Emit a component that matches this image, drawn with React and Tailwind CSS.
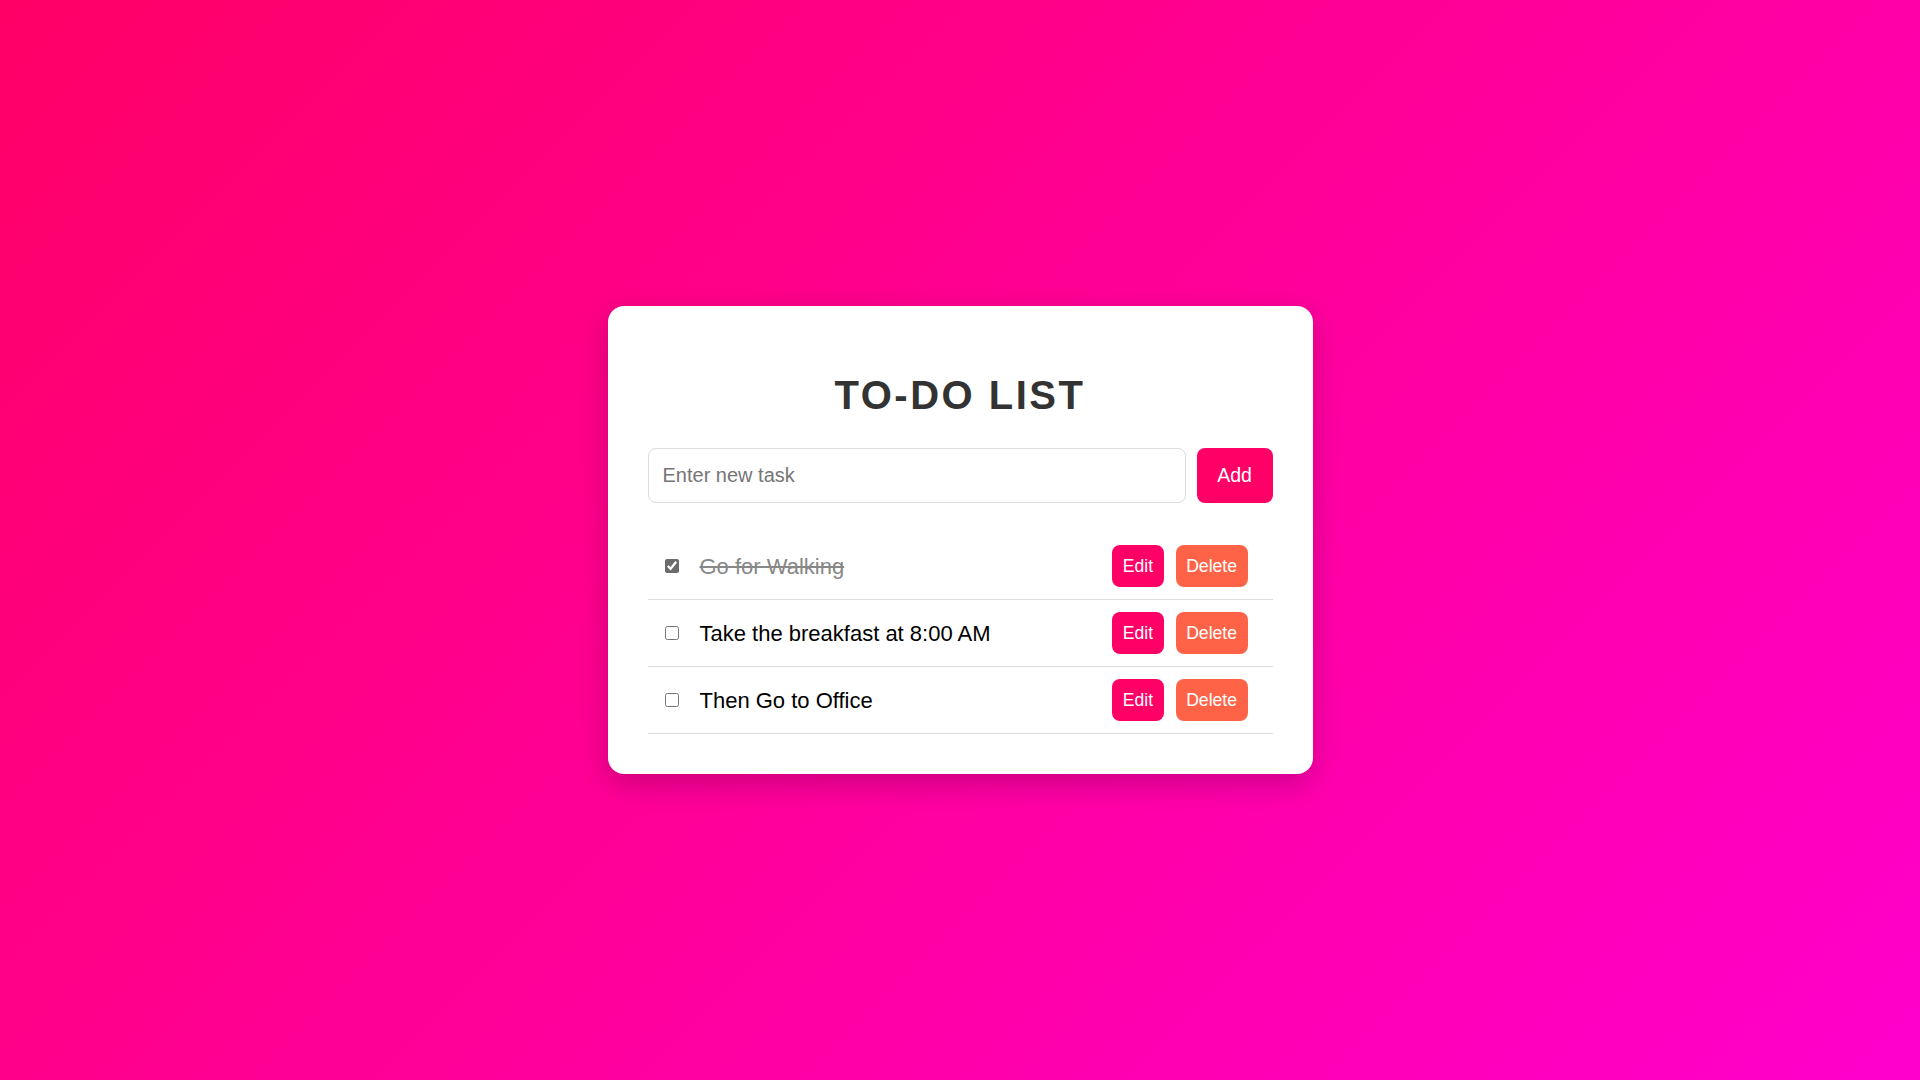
import React, { useState } from "react";

const initialTasks = [
  { id: 1, text: "Go for Walking", done: true },
  { id: 2, text: "Take the breakfast at 8:00 AM", done: false },
  { id: 3, text: "Then Go to Office", done: false },
];

const TaskRow = ({ task, onToggle }) => (
  <li className="flex items-center border-b border-[#dddddd] py-3 pl-[17px] pr-[25px]">
    <input
      type="checkbox"
      checked={task.done}
      onChange={() => onToggle(task.id)}
      className="h-[14px] w-[14px] shrink-0 accent-[#6b6b6b]"
    />
    <span
      className={
        task.done
          ? "ml-[21px] flex-1 text-[22px] text-[#888888] line-through"
          : "ml-[21px] flex-1 text-[22px] text-black"
      }
    >
      {task.text}
    </span>
    <div className="flex items-center gap-[12px]">
      <button className="h-[42px] rounded-lg bg-[#ff0066] px-[10.5px] text-[17.6px] text-white">
        Edit
      </button>
      <button className="h-[42px] rounded-lg bg-[#ff6347] px-[10.5px] text-[17.6px] text-white">
        Delete
      </button>
    </div>
  </li>
);

export default function App() {
  const [tasks, setTasks] = useState(initialTasks);
  const [value, setValue] = useState("");

  const toggle = (id) =>
    setTasks(tasks.map((t) => (t.id === id ? { ...t, done: !t.done } : t)));

  return (
    <div className="flex min-h-screen items-center justify-center bg-[linear-gradient(135deg,#ff0066,#ff00cc)] font-['Liberation_Sans',Arial,sans-serif]">
      <div className="w-[705px] rounded-2xl bg-white px-10 pb-10 pt-10 shadow-[0_10px_30px_rgba(0,0,0,0.2)]">
        <h1 className="mb-[30px] mt-[26px] text-center text-[40px] font-bold leading-[46px] tracking-[2.5px] text-[#333333]">
          TO-DO LIST
        </h1>
        <div className="flex gap-[11px]">
          <input
            type="text"
            value={value}
            onChange={(e) => setValue(e.target.value)}
            placeholder="Enter new task"
            className="h-[55px] min-w-0 flex-1 rounded-lg border border-[#dddddd] pl-[14px] text-[20px] outline-none placeholder:text-[#757575]"
          />
          <button className="h-[55px] w-[76px] rounded-lg bg-[#ff0066] text-[19.5px] text-white">
            Add
          </button>
        </div>
        <ul className="mt-[30px]">
          {tasks.map((task) => (
            <TaskRow key={task.id} task={task} onToggle={toggle} />
          ))}
        </ul>
      </div>
    </div>
  );
}
